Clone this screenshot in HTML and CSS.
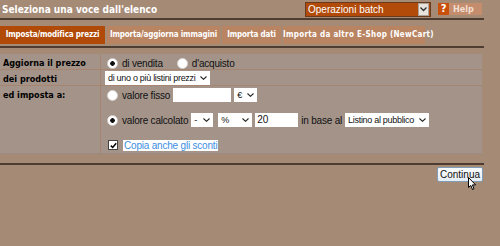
FILE: index.html
```html
<!DOCTYPE html>
<html lang="it">
<head>
  <meta charset="UTF-8">
  <title>Operazioni batch</title>
  <link rel="stylesheet" href="styles.css">
</head>
<body>
  <div class="page">
    <div class="top">
      <div class="title">Seleziona una voce dall'elenco</div>
      <div class="top-right">
        <div class="batch">
          <span>Operazioni batch</span>
          <span class="batch-arrow">
            <svg width="7" height="5" viewBox="0 0 7 5"><path d="M0.5 0.5 L3.5 3.5 L6.5 0.5" fill="none" stroke="#333" stroke-width="1.4"/></svg>
          </span>
        </div>
        <div class="help"><span class="help-q">?</span><span class="help-t">Help</span></div>
      </div>
    </div>

    <div class="tabbar">
      <div class="tab tab-1 active">Imposta/modifica prezzi</div>
      <div class="tab tab-2">Importa/aggiorna immagini</div>
      <div class="tab tab-3">Importa dati</div>
      <div class="tab tab-4">Importa da altro E-Shop (NewCart)</div>
    </div>

    <div class="panel">
      <div class="lbl row-1">Aggiorna il prezzo</div>
      <div class="val row-1">
        <label class="opt"><span class="radio on"></span> di vendita</label>
        <label class="opt"><span class="radio"></span> d'acquisto</label>
      </div>

      <div class="lbl row-2">dei prodotti</div>
      <div class="val row-2">
        <span class="sel sel-listini">di uno o più listini prezzi <svg class="chev" width="7" height="4" viewBox="0 0 7 4"><path d="M0.5 0.5 L3.5 3.3 L6.5 0.5" fill="none" stroke="#222" stroke-width="1.1"/></svg></span>
      </div>

      <div class="lbl">ed imposta a:</div>
      <div class="val stack">
        <div class="line">
          <label class="opt"><span class="radio"></span> valore fisso</label>
          <span class="txt txt-fisso"></span>
          <span class="sel sel-euro">€ <svg class="chev" width="7" height="4" viewBox="0 0 7 4"><path d="M0.5 0.5 L3.5 3.3 L6.5 0.5" fill="none" stroke="#222" stroke-width="1.1"/></svg></span>
        </div>
        <div class="line">
          <label class="opt"><span class="radio on"></span> valore calcolato</label>
          <span class="sel sel-segno">- <svg class="chev" width="7" height="4" viewBox="0 0 7 4"><path d="M0.5 0.5 L3.5 3.3 L6.5 0.5" fill="none" stroke="#222" stroke-width="1.1"/></svg></span>
          <span class="sel sel-perc">% <svg class="chev" width="7" height="4" viewBox="0 0 7 4"><path d="M0.5 0.5 L3.5 3.3 L6.5 0.5" fill="none" stroke="#222" stroke-width="1.1"/></svg></span>
          <span class="txt txt-num">20</span>
          <span class="plain">in base al</span>
          <span class="sel sel-listino">Listino al pubblico <svg class="chev" width="7" height="4" viewBox="0 0 7 4"><path d="M0.5 0.5 L3.5 3.3 L6.5 0.5" fill="none" stroke="#222" stroke-width="1.1"/></svg></span>
        </div>
        <div class="line">
          <span class="check">
            <svg width="7" height="7" viewBox="0 0 7 7"><path d="M0.8 3.6 L2.7 5.5 L6.2 1.2" fill="none" stroke="#000" stroke-width="1.5"/></svg>
          </span>
          <span class="picked">Copia anche gli sconti</span>
        </div>
      </div>
    </div>

    <div class="bottom">
      <button class="go">Continua</button>
      <svg class="cursor" width="9" height="14" viewBox="0 0 9 14"><path d="M0.5 0.5 L0.5 10.5 L2.8 8.4 L4.5 12.5 L6 11.8 L4.4 7.9 L7.6 7.9 Z" fill="#fff" stroke="#000" stroke-width="1" stroke-linejoin="round"/></svg>
    </div>
  </div>
</body>
</html>
```

FILE: styles.css
```css
body {
  margin: 0;
  background: #a58a76;
  font-family: "DejaVu Sans Condensed", "DejaVu Sans", Verdana, sans-serif;
  height: 246px;
  overflow: hidden;
}
.page {
  width: 484px;
}
.top {
  display: flex;
  justify-content: space-between;
  align-items: center;
  height: 18px;
  border-bottom: 2px solid #4e3c30;
}
.title {
  padding-left: 2px;
  font-size: 10px;
  font-weight: bold;
  color: #fff;
}
.top-right {
  display: flex;
  align-items: center;
  gap: 7px;
  padding-right: 2px;
}
.batch {
  display: flex;
  align-items: center;
  justify-content: space-between;
  width: 122px;
  height: 13px;
  background: #b24b0a;
  border: 1px solid #6b3a1c;
  color: #fff;
  font-family: "Liberation Sans", Arial, sans-serif;
  font-size: 10px;
  padding-left: 2px;
}
.batch-arrow {
  display: flex;
  align-items: center;
  justify-content: center;
  width: 9px;
  height: 11px;
  margin-right: 1px;
  background: #e8e4dc;
  border: 1px solid #a9a39a;
}
.help {
  display: flex;
  height: 12px;
  width: 44px;
  background: #c48d6d;
  font-size: 9px;
  font-weight: bold;
  color: #f2ddd0;
}
.help-q {
  width: 11px;
  background: #c8500a;
  color: #fff;
  text-align: center;
  font-size: 11px;
  line-height: 12px;
}
.help-t {
  padding-left: 4px;
  line-height: 12px;
}
.tabbar {
  display: flex;
  gap: 2px;
  margin-top: 6px;
  padding-bottom: 2px;
  border-bottom: 2px solid #4e3c30;
}
.tab {
  flex: none;
  white-space: nowrap;
  height: 18px;
  line-height: 18px;
  text-align: center;
  background: #b98462;
  color: #fff;
  font-size: 8px;
  font-weight: bold;
  letter-spacing: -0.15px;
}
.tab.active {
  background: #b04a06;
}
.tab-1 { width: 105px; }
.tab-2 { width: 113px; }
.tab-3 { width: 59px; }
.tab-4 { width: 142px; letter-spacing: 0.3px; }
.panel {
  display: grid;
  grid-template-columns: 101px 1fr;
  margin-top: 6px;
  width: 482px;
  background: #a39389;
  border-bottom: 1px solid #9a8a80;
}
.lbl {
  padding: 4px 3px 0;
  font-size: 9px;
  font-weight: bold;
  line-height: 11px;
  color: #000;
  border-right: 1px solid #a58470;
  border-bottom: 1px solid #a58470;
}
.val {
  display: flex;
  align-items: center;
  padding-left: 5px;
  border-bottom: 1px solid #a58470;
  font-family: "Liberation Sans", Arial, sans-serif;
  font-size: 10px;
  letter-spacing: -0.2px;
  color: #111;
}
.row-1 {
  box-sizing: border-box;
  height: 16px;
}
.val.row-1 {
  padding-top: 3px;
}
.row-2 {
  box-sizing: border-box;
  height: 16px;
}
.val.row-2 {
  padding-top: 0;
}
.lbl:nth-last-child(2),
.val:last-child {
  border-bottom: none;
}
.stack {
  flex-direction: column;
  align-items: flex-start;
  gap: 11px;
  padding-top: 2px;
  padding-bottom: 1px;
}
.line {
  display: flex;
  align-items: center;
  gap: 3px;
  height: 14px;
}
.opt {
  display: flex;
  align-items: center;
  gap: 4px;
  margin-right: 13px;
}
.line .opt {
  margin-right: 0;
}
.radio {
  width: 9px;
  height: 9px;
  margin-left: 1px;
  border-radius: 50%;
  background: #fff;
  border: 1px solid #d8d4d0;
}
.radio.on {
  background: radial-gradient(circle, #111 0 2px, #fff 2.6px);
}
.sel {
  display: inline-flex;
  align-items: center;
  justify-content: space-between;
  box-sizing: border-box;
  height: 14px;
  padding: 0 3px;
  background: #fff;
  color: #111;
  font-size: 9px;
  letter-spacing: -0.3px;
  white-space: nowrap;
}
.chev {
  margin-left: 3px;
  flex: none;
}
.sel-listini { width: 105px; margin-left: -1px; }
.sel-euro { width: 23px; }
.sel-segno { width: 22px; }
.sel-perc { width: 34px; margin-left: 2px; }
.sel-listino { width: 84px; }
.txt {
  box-sizing: border-box;
  height: 14px;
  line-height: 14px;
  padding: 0 2px;
  background: #fff;
  color: #111;
}
.txt-fisso { width: 58px; }
.txt-num { width: 43px; }
.check {
  display: flex;
  align-items: center;
  justify-content: center;
  width: 8px;
  height: 8px;
  margin-left: 2px;
  background: #fff;
  border: 1px solid #444;
}
.picked {
  margin-left: 2px;
  background: #fff;
  color: #3d8ee0;
  padding: 0 1px;
}
.bottom {
  position: relative;
  display: flex;
  justify-content: flex-end;
  margin-top: 9px;
  border-top: 2px solid #4e3c30;
  padding-top: 2px;
}
.go {
  height: 15px;
  width: 46px;
  padding: 0;
  margin-right: 1px;
  background: linear-gradient(#fafcfe, #e4ecf4);
  border: 1px solid #7f9db9;
  border-radius: 2px;
  font-family: "Liberation Sans", Arial, sans-serif;
  font-size: 10px;
  color: #111;
}
.cursor {
  position: absolute;
  left: 468px;
  top: 12px;
}
```
